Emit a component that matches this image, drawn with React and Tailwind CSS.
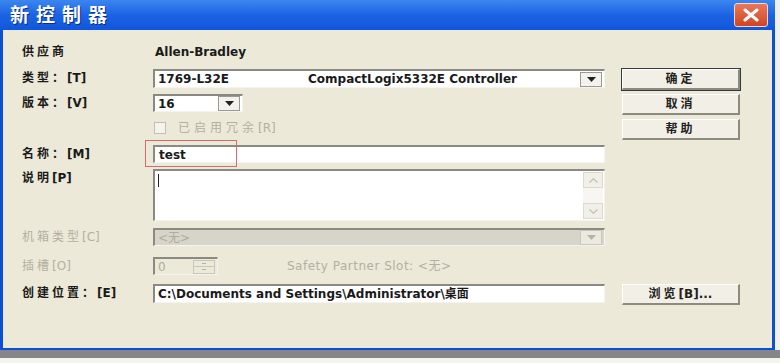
import React from 'react';

// XP-style "新控制器" dialog
const FONT = { fontFamily: '"DejaVu Sans", "Noto Sans CJK SC", sans-serif' };

const Sunken = ({ className = '', children }) => (
    <div className={`border-t-2 border-l-2 border-[#8a8a82] border-b border-r border-b-[#f4f3ee] border-r-[#f4f3ee] ${className}`}>
        {children}
    </div>
);

const Arrow = ({ disabled = false }) => (
    <div className={`w-[22px] h-[15px] flex items-center justify-center border ${disabled ? 'border-[#c9c7bc] bg-[#ebe9e0]' : 'border-[#9a9a92] bg-[#f3f2ec]'}`}>
        <svg width="9" height="5" viewBox="0 0 9 5">
            <path d="M0 0 L9 0 L4.5 5 Z" fill={disabled ? '#b5b3a8' : '#222'} />
        </svg>
    </div>
);

const Button = ({ label, primary = false }) => (
    <div
        className={`h-[21px] w-[118px] flex items-center justify-center text-[12px] font-bold text-[#222] bg-[#f1efe6] border-t border-l border-white border-b-2 border-r-2 border-b-[#8d8b80] border-r-[#8d8b80] ${primary ? 'outline outline-1 outline-[#3a3a3a]' : ''}`}
    >
        {label}
    </div>
);

// chinese part spaced out, key part ([T]) tight
const Label = ({ cn, keyName }) => (
    <>
        <span className="tracking-[3px]">{cn}</span>
        {keyName && <span>{keyName}</span>}
    </>
);

// every row has a fixed height; buttons may run past it
const Row = ({ label, dim = false, h = 19, mt, children, button }) => (
    <div className="flex items-start overflow-visible" style={{ marginTop: mt, height: h }}>
        <div
            className={`w-[131px] shrink-0 text-[12px] font-bold leading-[19px] ${dim ? 'text-[#b3b0a3] font-normal' : 'text-[#1a1a1a]'}`}
        >
            {label}
        </div>
        <div className="w-[452px] shrink-0" style={{ height: h }}>
            {children}
        </div>
        <div className="ml-[17px] w-[118px] shrink-0">{button}</div>
    </div>
);

export default function App() {
    return (
        <div className="w-[780px] h-[363px] overflow-hidden bg-[#f4f4ef] flex flex-col" style={FONT}>
            <div className="flex h-[350px]">
                {/* window */}
                <div className="w-[775px] h-full flex flex-col bg-[#0b4fd6] pl-[3px] pr-[3px] pb-[2px]">
                    {/* title bar */}
                    <div className="h-[30px] shrink-0 flex items-center justify-between bg-gradient-to-b from-[#3c86f0] via-[#1c63e3] to-[#0f56dc] -mx-[3px] px-[10px]">
                        <span className="text-white font-bold text-[19px] tracking-[7px] [text-shadow:1px_1px_0_#0a2f8a]">新控制器</span>
                        <div className="w-[34px] h-[24px] mr-[-3px] rounded-[3px] border border-[#f3d6c8] bg-gradient-to-b from-[#e8795a] to-[#cf4420] flex items-center justify-center">
                            <svg width="18" height="14" viewBox="0 0 18 14">
                                <path d="M3 2 L15 12 M15 2 L3 12" stroke="white" strokeWidth="3" strokeLinecap="round" />
                            </svg>
                        </div>
                    </div>

                    {/* body */}
                    <div className="flex-1 bg-[#ece9d8] pl-[19px] pt-[13px]">
                        <Row label={<Label cn="供应商" />}>
                            <div className="pl-[2px] text-[12px] font-bold leading-[19px] text-[#1a1a1a]">Allen-Bradley</div>
                        </Row>

                        <Row label={<Label cn="类型：" keyName="[T]" />} mt={7} button={<Button label={<Label cn="确定" />} primary />}>
                            <Sunken className="h-[19px] bg-white flex items-center pl-[3px] pr-[2px]">
                                <span className="text-[12px] font-bold text-[#1a1a1a] w-[150px]">1769-L32E</span>
                                <span className="text-[12px] font-bold text-[#1a1a1a] flex-1">CompactLogix5332E Controller</span>
                                <Arrow />
                            </Sunken>
                        </Row>

                        <Row label={<Label cn="版本：" keyName="[V]" />} mt={6} h={18} button={<Button label={<Label cn="取消" />} />}>
                            <Sunken className="h-[18px] w-[90px] bg-white flex items-center pl-[3px] pr-[2px]">
                                <span className="text-[12px] font-bold text-[#1a1a1a] flex-1">16</span>
                                <Arrow />
                            </Sunken>
                        </Row>

                        <Row label="" mt={7} h={18} button={<Button label={<Label cn="帮助" />} />}>
                            <div className="flex items-center h-[18px] pl-[1px]">
                                <div className="w-[12px] h-[12px] border border-[#c2c0b3] bg-[#f4f3ee]" />
                                <span className="ml-[12px] text-[12px] text-[#b3b0a3]">
                                    <span className="tracking-[4px]">已启用冗余</span>[R]
                                </span>
                            </div>
                        </Row>

                        <Row label={<Label cn="名称：" keyName="[M]" />} mt={8} h={18}>
                            <div className="relative">
                                <Sunken className="h-[18px] bg-white flex items-center pl-[4px]">
                                    <span className="text-[12px] font-bold text-[#1a1a1a]">test</span>
                                </Sunken>
                                <div className="absolute left-[-8px] top-[-5px] w-[92px] h-[27px] border border-[#d46a6a]" />
                            </div>
                        </Row>

                        <Row label={<Label cn="说明" keyName="[P]" />} mt={6} h={52}>
                            <Sunken className="h-[52px] bg-white flex">
                                <div className="flex-1 pl-[3px] pt-[3px]">
                                    <div className="w-[1px] h-[13px] bg-[#222]" />
                                </div>
                                <div className="w-[20px] mr-[1px] my-[1px] flex flex-col justify-between bg-[#f7f6f2]">
                                    <div className="h-[16px] border border-[#dcdad0] bg-[#f0efe8] flex items-center justify-center">
                                        <svg width="9" height="5" viewBox="0 0 9 5"><path d="M0.5 4.5 L4.5 0.8 L8.5 4.5" stroke="#c2c0b5" fill="none" strokeWidth="1.3" /></svg>
                                    </div>
                                    <div className="h-[16px] border border-[#dcdad0] bg-[#f0efe8] flex items-center justify-center">
                                        <svg width="9" height="5" viewBox="0 0 9 5"><path d="M0.5 0.5 L4.5 4.2 L8.5 0.5" stroke="#c2c0b5" fill="none" strokeWidth="1.3" /></svg>
                                    </div>
                                </div>
                            </Sunken>
                        </Row>

                        <Row label={<Label cn="机箱类型" keyName="[C]" />} dim mt={7} h={18}>
                            <Sunken className="h-[18px] bg-[#d7d4c9] flex items-center pl-[3px] pr-[2px]">
                                <span className="text-[12px] text-[#b0ad9f] flex-1">&lt;无&gt;</span>
                                <Arrow disabled />
                            </Sunken>
                        </Row>

                        <Row label={<Label cn="插槽" keyName="[O]" />} dim mt={11} h={18}>
                            <div className="flex items-center h-[18px]">
                                <Sunken className="h-[18px] w-[65px] bg-[#ece9d8] flex items-center pl-[3px] pr-[2px]">
                                    <span className="text-[12px] text-[#b0ad9f] flex-1">0</span>
                                    <div className="w-[22px] h-[14px] border border-[#c9c7bc] flex flex-col">
                                        <div className="flex-1 border-b border-[#c9c7bc] flex items-center justify-center">
                                            <div className="w-[4px] h-[1px] bg-[#b5b3a8]" />
                                        </div>
                                        <div className="flex-1 flex items-center justify-center">
                                            <div className="w-[4px] h-[1px] bg-[#b5b3a8]" />
                                        </div>
                                    </div>
                                </Sunken>
                                <span className="ml-[69px] text-[12px] text-[#b3b0a3] tracking-[0.5px]">Safety Partner Slot: &lt;无&gt;</span>
                            </div>
                        </Row>

                        <Row label={<Label cn="创建位置：" keyName="[E]" />} mt={9} h={19} button={<Button label={<><Label cn="浏览" />[B]...</>} />}>
                            <Sunken className="h-[19px] bg-white flex items-center pl-[3px]">
                                <span className="text-[12px] font-bold text-[#1a1a1a]">C:\Documents and Settings\Administrator\桌面</span>
                            </Sunken>
                        </Row>
                    </div>
                </div>
                <div className="flex-1 bg-[#f0f0ec]" />
            </div>
            <div className="h-[8px] bg-[#85858a]" />
            <div className="flex-1 bg-[#f4f4ef]" />
        </div>
    );
}
